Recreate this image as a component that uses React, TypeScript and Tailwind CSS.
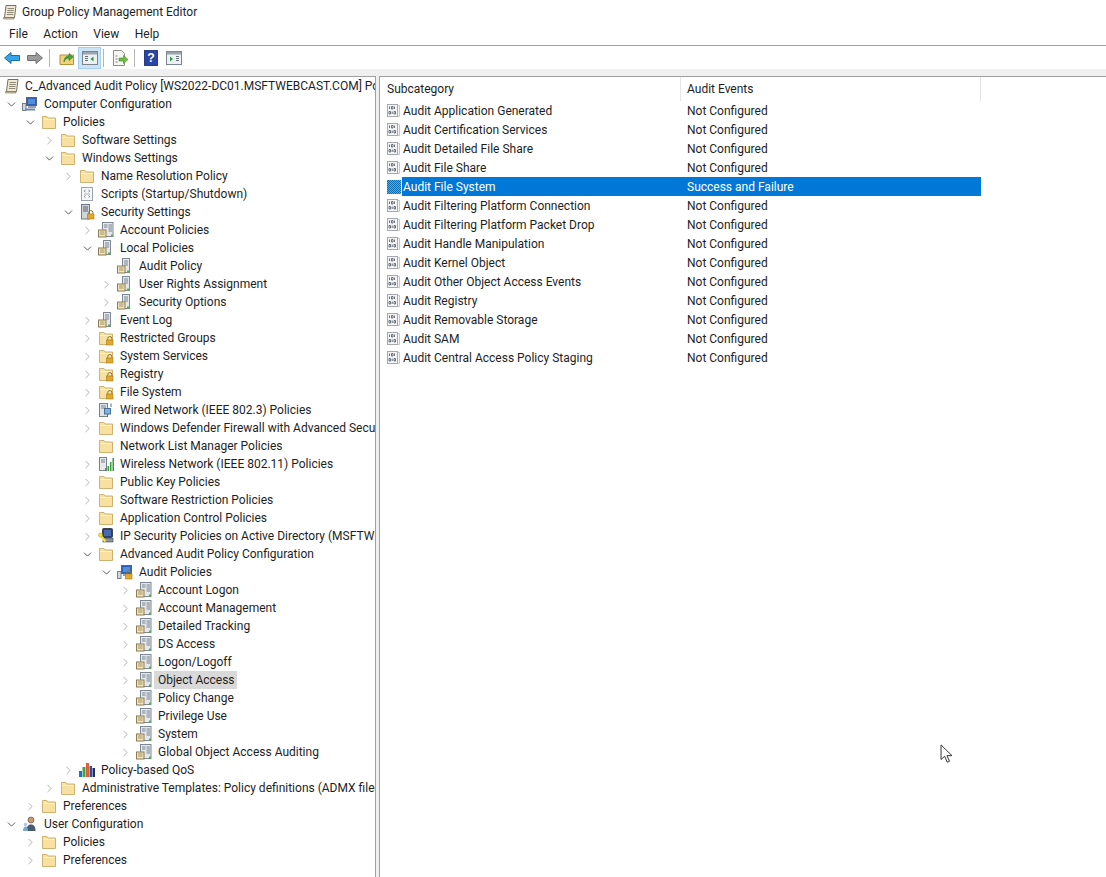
import { ChevronDown, ChevronRight } from "lucide-react"

type IconName =
  | "doc" | "computer" | "folder" | "script" | "serverLock" | "policy" | "policyWide" | "lockFolder"
  | "wired" | "wireless" | "ipsec" | "auditRoot" | "qos" | "user"

type Row = { label: string; level: number; icon: IconName; state?: "open" | "closed"; selected?: boolean }

const tree: Row[] = [
  { label: "Computer Configuration", level: 0, icon: "computer", state: "open" },
  { label: "Policies", level: 1, icon: "folder", state: "open" },
  { label: "Software Settings", level: 2, icon: "folder", state: "closed" },
  { label: "Windows Settings", level: 2, icon: "folder", state: "open" },
  { label: "Name Resolution Policy", level: 3, icon: "folder", state: "closed" },
  { label: "Scripts (Startup/Shutdown)", level: 3, icon: "script" },
  { label: "Security Settings", level: 3, icon: "serverLock", state: "open" },
  { label: "Account Policies", level: 4, icon: "policyWide", state: "closed" },
  { label: "Local Policies", level: 4, icon: "policy", state: "open" },
  { label: "Audit Policy", level: 5, icon: "policy" },
  { label: "User Rights Assignment", level: 5, icon: "policy", state: "closed" },
  { label: "Security Options", level: 5, icon: "policy", state: "closed" },
  { label: "Event Log", level: 4, icon: "policy", state: "closed" },
  { label: "Restricted Groups", level: 4, icon: "lockFolder", state: "closed" },
  { label: "System Services", level: 4, icon: "lockFolder", state: "closed" },
  { label: "Registry", level: 4, icon: "lockFolder", state: "closed" },
  { label: "File System", level: 4, icon: "lockFolder", state: "closed" },
  { label: "Wired Network (IEEE 802.3) Policies", level: 4, icon: "wired", state: "closed" },
  { label: "Windows Defender Firewall with Advanced Security", level: 4, icon: "folder", state: "closed" },
  { label: "Network List Manager Policies", level: 4, icon: "folder" },
  { label: "Wireless Network (IEEE 802.11) Policies", level: 4, icon: "wireless", state: "closed" },
  { label: "Public Key Policies", level: 4, icon: "folder", state: "closed" },
  { label: "Software Restriction Policies", level: 4, icon: "folder", state: "closed" },
  { label: "Application Control Policies", level: 4, icon: "folder", state: "closed" },
  { label: "IP Security Policies on Active Directory (MSFTWEBCAST.COM)", level: 4, icon: "ipsec", state: "closed" },
  { label: "Advanced Audit Policy Configuration", level: 4, icon: "folder", state: "open" },
  { label: "Audit Policies", level: 5, icon: "auditRoot", state: "open" },
  { label: "Account Logon", level: 6, icon: "policyWide", state: "closed" },
  { label: "Account Management", level: 6, icon: "policyWide", state: "closed" },
  { label: "Detailed Tracking", level: 6, icon: "policyWide", state: "closed" },
  { label: "DS Access", level: 6, icon: "policyWide", state: "closed" },
  { label: "Logon/Logoff", level: 6, icon: "policyWide", state: "closed" },
  { label: "Object Access", level: 6, icon: "policyWide", state: "closed", selected: true },
  { label: "Policy Change", level: 6, icon: "policyWide", state: "closed" },
  { label: "Privilege Use", level: 6, icon: "policyWide", state: "closed" },
  { label: "System", level: 6, icon: "policyWide", state: "closed" },
  { label: "Global Object Access Auditing", level: 6, icon: "policyWide", state: "closed" },
  { label: "Policy-based QoS", level: 3, icon: "qos", state: "closed" },
  { label: "Administrative Templates: Policy definitions (ADMX files) retrieved", level: 2, icon: "folder", state: "closed" },
  { label: "Preferences", level: 1, icon: "folder", state: "closed" },
  { label: "User Configuration", level: 0, icon: "user", state: "open" },
  { label: "Policies", level: 1, icon: "folder", state: "closed" },
  { label: "Preferences", level: 1, icon: "folder", state: "closed" },
]

const indent = ["pl-[4px]", "pl-[23px]", "pl-[42px]", "pl-[61px]", "pl-[80px]", "pl-[99px]", "pl-[118px]"]

const subcategories = [
  ["Audit Application Generated", "Not Configured"],
  ["Audit Certification Services", "Not Configured"],
  ["Audit Detailed File Share", "Not Configured"],
  ["Audit File Share", "Not Configured"],
  ["Audit File System", "Success and Failure"],
  ["Audit Filtering Platform Connection", "Not Configured"],
  ["Audit Filtering Platform Packet Drop", "Not Configured"],
  ["Audit Handle Manipulation", "Not Configured"],
  ["Audit Kernel Object", "Not Configured"],
  ["Audit Other Object Access Events", "Not Configured"],
  ["Audit Registry", "Not Configured"],
  ["Audit Removable Storage", "Not Configured"],
  ["Audit SAM", "Not Configured"],
  ["Audit Central Access Policy Staging", "Not Configured"],
]

function Folder() {
  return (
    <>
      <path d="M1.500 14.500V2.500h4.500l1 1.500h7.500v10.500z" fill="#f8e0a0" stroke="#cdb273" strokeWidth="1" />
      <path d="M2.500 5.500h11" stroke="#fdf4d6" strokeWidth="1" />
    </>
  )
}

function Lock() {
  return (
    <>
      <path d="M9.800 10V8.500a2 2 0 0 1 4 0V10" fill="none" stroke="#8a7440" strokeWidth="1" />
      <rect x="8.500" y="10" width="6.500" height="5" fill="#e0a92e" stroke="#a67c1c" strokeWidth="0.6" />
    </>
  )
}

function Computer() {
  return (
    <>
      <rect x="4.500" y="1.500" width="10" height="8" fill="#2b5fb8" stroke="#5b6675" />
      <rect x="6" y="3" width="7" height="5" fill="#4f8ee0" />
      <rect x="6" y="10" width="8" height="2" fill="#9aa3ad" />
    </>
  )
}

function PolicySheet({ wide }: { wide?: boolean }) {
  return (
    <>
      <rect x={wide ? 4.5 : 5.5} y="0.500" width={wide ? 10.5 : 7} height="14" fill="#e4e8ec" stroke="#7d8894" />
      <path d={wide ? "M6 3h3.500M10.500 3H14M6 5h3.500M10.500 5H14M10.500 7H14M10.500 9H14" : "M7 3h4M7 5h4M7 7h4"} stroke="#77838f" strokeWidth="1" />
      <rect x="0.500" y="8" width="7.500" height="7" fill="#f2e4b8" stroke="#8d7d55" />
      <path d="M2 10h4.500M2 12h4.500" stroke="#8d7d55" strokeWidth="0.8" />
      <rect x={wide ? 13 : 10} y="12.500" width="2" height="2" fill="#4cb848" />
    </>
  )
}

function TreeIcon({ name }: { name: IconName }) {
  return (
    <svg viewBox="0 0 16 16" className="w-4 h-4 shrink-0">
      {name === "folder" && <Folder />}
      {name === "lockFolder" && (
        <>
          <Folder />
          <Lock />
        </>
      )}
      {name === "doc" && (
        <>
          <path d="M4 1.500h10l-1.500 12H2.500z" fill="#efe9d6" stroke="#77705d" />
          <path d="M5.500 4.500h6.500M5.300 6.500h6.500M5 8.500h6.500M4.800 10.500h6.500" stroke="#77705d" strokeWidth="0.8" />
          <path d="M1.500 13.500h10.500v1.500H1.500z" fill="#cfc7ad" stroke="#77705d" strokeWidth="0.6" />
        </>
      )}
      {name === "script" && (
        <>
          <rect x="2.500" y="1.500" width="11" height="13" fill="#f6f7f8" stroke="#9aa3ad" />
          <path d="M5 5l1.500-1M5 5l1.500 1M11 5L9.500 4M11 5L9.500 6M5 10.500l1.500-1M5 10.500l1.500 1M11 10.500l-1.500-1M11 10.500l-1.500 1" stroke="#6f7a86" strokeWidth="0.8" />
          <path d="M5 8h6" stroke="#9aa3ad" strokeWidth="0.8" />
        </>
      )}
      {name === "serverLock" && (
        <>
          <rect x="2.500" y="0.500" width="8" height="14.500" fill="#cfd5db" stroke="#6f7a86" />
          <path d="M4 3h5M4 5h5M4 7h5" stroke="#55606c" strokeWidth="1" />
          <Lock />
        </>
      )}
      {name === "policy" && <PolicySheet />}
      {name === "policyWide" && <PolicySheet wide />}
      {name === "wired" && (
        <>
          <rect x="1.500" y="1.500" width="8" height="13" fill="#dfe4e9" stroke="#77828e" />
          <path d="M3 4h5M3 6h5" stroke="#77828e" />
          <rect x="6.500" y="6.500" width="6" height="5.500" fill="#7fb2e5" stroke="#4a6f96" />
          <path d="M9.500 12v3M13 5V1.500" stroke="#4a6f96" />
        </>
      )}
      {name === "wireless" && (
        <>
          <rect x="1.500" y="1.500" width="7" height="13" fill="#e5e9ec" stroke="#77828e" />
          <path d="M3 4h4M3 6h4" stroke="#77828e" />
          <path d="M7 15v-3h1.500v3zM9.500 15v-5H11v5zM12 15V6h1.500v9zM14.500 15V2H16v13z" fill="#3a9a3c" />
        </>
      )}
      {name === "ipsec" && (
        <>
          <rect x="4.500" y="0.500" width="10" height="9" rx="1" fill="#2c3f73" stroke="#3d4450" />
          <rect x="6" y="2" width="7" height="6" fill="#4668b5" />
          <rect x="5" y="10.500" width="10" height="3.500" fill="#8a929c" stroke="#3d4450" strokeWidth="0.6" />
          <path d="M1.500 6.500l6 7" stroke="#f5e23a" strokeWidth="2.500" />
          <circle cx="2.500" cy="7" r="2" fill="#f5e23a" stroke="#a79a1f" strokeWidth="0.5" />
        </>
      )}
      {name === "auditRoot" && (
        <>
          <rect x="0.500" y="7.500" width="3.500" height="7" fill="#d2d7dc" stroke="#77828e" />
          <Computer />
          <Lock />
        </>
      )}
      {name === "computer" && (
        <>
          <rect x="0.500" y="7.500" width="3.500" height="7" fill="#d2d7dc" stroke="#77828e" />
          <Computer />
          <path d="M3 13.500h10" stroke="#6d88aa" strokeWidth="2" />
        </>
      )}
      {name === "qos" && (
        <>
          <rect x="0" y="9" width="3" height="6" fill="#1f6fd1" />
          <rect x="3.500" y="5" width="3" height="10" fill="#3aa648" />
          <rect x="7" y="1" width="3" height="14" fill="#e25d3a" />
          <rect x="10.500" y="4" width="2.500" height="11" fill="#2c4f9e" />
          <rect x="13.500" y="6" width="2.500" height="9" fill="#1d2f6a" />
        </>
      )}
      {name === "user" && (
        <>
          <circle cx="9" cy="4" r="3" fill="#c99a72" stroke="#5b4434" strokeWidth="0.6" />
          <path d="M4.500 15c0-5 2-6.500 4.500-6.500s4.500 1.500 4.500 6.500z" fill="#465a72" />
          <path d="M1 15c0-3 1-4.500 2.500-4.500S6 12 6 15z" fill="#79a7d8" />
          <circle cx="3.500" cy="8.500" r="1.800" fill="#a9c8ea" />
        </>
      )}
    </svg>
  )
}

function BinaryIcon({ active }: { active?: boolean }) {
  if (active) {
    return (
      <svg viewBox="0 0 14 14" className="w-[14px] h-[14px] shrink-0">
        <defs>
          <pattern id="dither" width="2" height="2" patternUnits="userSpaceOnUse">
            <rect width="2" height="2" fill="#0f6fb0" />
            <rect width="1" height="1" fill="#6fa89c" />
            <rect x="1" y="1" width="1" height="1" fill="#6fa89c" />
          </pattern>
        </defs>
        <rect width="14" height="14" fill="url(#dither)" />
      </svg>
    )
  }
  return (
    <svg viewBox="0 0 14 14" className="w-[14px] h-[14px] shrink-0">
      <path d="M3 1.500h9.500v11H3" fill="#f7f7f7" stroke="#c4c7cb" />
      <rect x="0.500" y="0.500" width="10" height="12" fill="#f5f5f5" stroke="#a5a9ae" />
      <path d="M2.500 2.500v2.500M4.500 2.500h1.500v2.500H4.500zM7.500 2.500v2.500M2 7.500h1.500V10H2zM5.200 7.500v2.500M7 7.500h1.500V10H7z" fill="none" stroke="#5b6470" strokeWidth="0.9" />
    </svg>
  )
}

function ToolbarIcons() {
  return (
    <div className="flex items-center h-[23px] pl-1">
      <svg viewBox="0 0 16 14" className="w-4 h-[14px]">
        <path d="M0.500 7L7 1.500V4.500h8.500v5H7v3z" fill="#35a4e8" stroke="#1a6fa8" />
      </svg>
      <svg viewBox="0 0 16 14" className="w-4 h-[14px] ml-[7px]">
        <path d="M15.500 7L9 1.500V4.500H0.500v5H9v3z" fill="#9b9b9b" stroke="#707070" />
      </svg>
      <div className="w-px h-[18px] bg-[#b5b5b5] ml-[6px]" />
      <svg viewBox="0 0 16 16" className="w-4 h-4 ml-[9px]">
        <path d="M1 14.500V5h13.500v9.500z" fill="#f0d27a" stroke="#b5913c" />
        <path d="M5 12c0-4 2-6 5-6V3.500l4 3.500-4 3.500V8c-2 0-4 1-5 4z" fill="#3fa83f" stroke="#2a7a2a" strokeWidth="0.6" />
      </svg>
      <div className="w-[23px] h-[22px] ml-[3px] bg-[#cce4f7] border border-[#a6cfee] flex items-center justify-center">
        <svg viewBox="0 0 16 16" className="w-4 h-4">
          <rect x="0.500" y="1.500" width="15" height="13" fill="#eef1f3" stroke="#7a8590" />
          <rect x="1" y="2" width="14" height="2.500" fill="#9aa5b0" />
          <path d="M3 6.500h3M3 8.500h3M3 10.500h3" stroke="#65707b" />
          <path d="M11.500 6.500v5L8.500 9z" fill="#2f9a3f" />
        </svg>
      </div>
      <div className="w-px h-[18px] bg-[#b5b5b5] ml-[2px]" />
      <svg viewBox="0 0 16 16" className="w-4 h-4 ml-[8px]">
        <path d="M1.500 0.500h8l3 3V15.500h-11z" fill="#f6f6f2" stroke="#8f8f86" />
        <path d="M3.500 6h2M3.500 9h2M3.500 12h2" stroke="#7b7b72" />
        <path d="M7 8h4.500V5.500L16 9.500l-4.500 4V11H7z" fill="#6cbe45" stroke="#3f8a2a" strokeWidth="0.6" />
      </svg>
      <div className="w-px h-[18px] bg-[#b5b5b5] ml-[6px]" />
      <svg viewBox="0 0 16 18" className="w-[14px] h-[18px] ml-[9px]">
        <rect x="0.500" y="0.500" width="15" height="17" fill="#2a45a8" stroke="#1d2f78" />
        <text x="8" y="14" textAnchor="middle" fontSize="14" fontWeight="700" fill="#ffffff" fontFamily="Liberation Sans">?</text>
      </svg>
      <svg viewBox="0 0 16 16" className="w-4 h-4 ml-[8px]">
        <rect x="0.500" y="1.500" width="15" height="13" fill="#eef1f3" stroke="#7a8590" />
        <rect x="1" y="2" width="14" height="2.500" fill="#9aa5b0" />
        <path d="M10 6.500h3M10 8.500h3M10 10.500h3" stroke="#65707b" />
        <path d="M4 6.500v5L7 9z" fill="#2f9a3f" />
      </svg>
    </div>
  )
}

export default function App() {
  return (
    <div className="w-[1106px] h-[877px] bg-white flex flex-col overflow-hidden relative text-[12px] text-[#1e1e1e] font-['Roboto','Liberation_Sans',sans-serif]">
      <div className="h-[23px] flex items-center gap-[4px] pl-[2px] shrink-0">
        <TreeIcon name="doc" />
        <span>Group Policy Management Editor</span>
      </div>
      <div className="h-[22px] flex items-center gap-[15.5px] pl-[9px] border-b border-[#a0a0a0] box-content shrink-0">
        <span>File</span>
        <span>Action</span>
        <span>View</span>
        <span>Help</span>
      </div>
      <div className="shrink-0">
        <ToolbarIcons />
      </div>
      <div className="h-[7px] bg-[#f0f0f0] shrink-0" />
      <div className="flex flex-1 min-h-0 bg-[#f0f0f0]">
        <div className="w-[376px] shrink-0 bg-white border-t border-r border-[#a0a0a0] overflow-hidden pr-[1px]">
          <div className="h-[18px] flex items-center gap-[5px] pl-[4px] whitespace-nowrap">
            <TreeIcon name="doc" />
            <span>C_Advanced Audit Policy [WS2022-DC01.MSFTWEBCAST.COM] Policy</span>
          </div>
          {tree.map((row, i) => (
            <div key={i} className={`h-[18px] flex items-center whitespace-nowrap ${indent[row.level]}`}>
              <span className="w-[14px] shrink-0 flex justify-center">
                {row.state === "open" && <ChevronDown size={13} strokeWidth={1.6} className="text-[#444444]" />}
                {row.state === "closed" && <ChevronRight size={13} strokeWidth={1.6} className="text-[#a6a6a6]" />}
              </span>
              <span className="w-[4px] shrink-0" />
              <TreeIcon name={row.icon} />
              <span className={`ml-[2px] pl-[4px] pr-[2px] leading-[18px] ${row.selected ? "bg-[#d9d9d9]" : ""}`}>
                {row.label}
              </span>
            </div>
          ))}
        </div>
        <div className="w-[3px] shrink-0" />
        <div className="flex-1 bg-white border-t border-l border-[#a0a0a0] overflow-hidden">
          <div className="h-[24px] flex w-[601px]">
            <div className="w-[301px] pl-[7px] border-r border-[#e5e5e5] flex items-center">Subcategory</div>
            <div className="w-[300px] pl-[6px] border-r border-[#e5e5e5] flex items-center">Audit Events</div>
          </div>
          {subcategories.map(([name, value]) => {
            const active = value !== "Not Configured"
            return (
              <div key={name} className="h-[19px] flex items-center w-[601px] pl-[7px]">
                <BinaryIcon active={active} />
                <div className={`flex flex-1 h-full items-center ml-[1px] ${active ? "bg-[#0078d7] text-white" : ""}`}>
                  <span className="w-[285px] pl-[1px]">{name}</span>
                  <span>{value}</span>
                </div>
              </div>
            )
          })}
        </div>
      </div>
      <svg viewBox="0 0 14 22" className="absolute left-[940px] top-[744px] w-[13px] h-[20px]">
        <path d="M1 1v16l4-3.500 2.800 6.500 2.500-1-2.800-6.200H13z" fill="#ffffff" stroke="#222222" strokeWidth="1" />
      </svg>
    </div>
  )
}
